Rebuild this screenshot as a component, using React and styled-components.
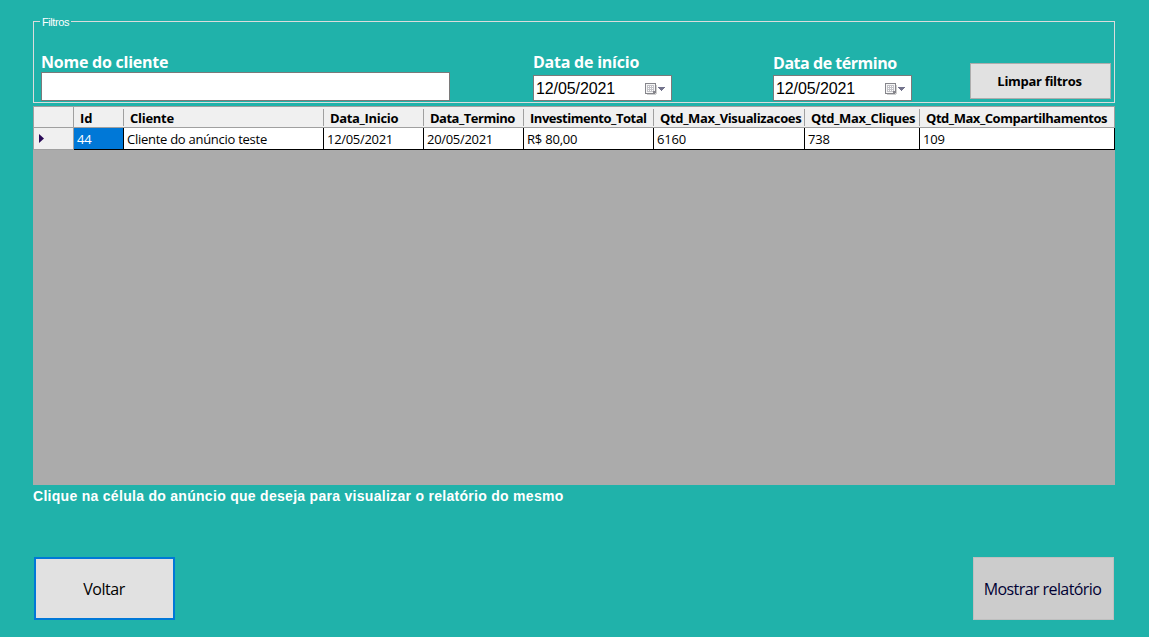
import React from 'react';
import styled, { createGlobalStyle } from 'styled-components';

const Global = createGlobalStyle`
  *, *::before, *::after { box-sizing: border-box; }
  body { margin: 0; background: #20b2aa; }
`;

const ui = '"Open Sans", "Noto Sans", sans-serif';
const system = '"Liberation Sans", Arial, sans-serif';

const Window = styled.main`
  width: 1149px;
  height: 637px;
  padding: 16px 34px 0 33px;
  display: flex;
  flex-direction: column;
  background: #20b2aa;
  overflow: hidden;
`;

const Filters = styled.section`
  height: 87px;
  display: flex;
  flex-direction: column;
  margin-bottom: 3px;
`;

const Legend = styled.div`
  height: 12px;
  width: 1082px;
  display: flex;
  align-items: flex-start;
  color: #fff;
  font: 11px/12px ${system};
  letter-spacing: -0.42px;
  white-space: nowrap;
  &::before, &::after {
    content: '';
    height: 7px;
    margin-top: 5px;
    border-top: 1px solid #dcdcdc;
  }
  &::before { width: 7px; border-left: 1px solid #dcdcdc; }
  &::after { flex: 1; border-right: 1px solid #dcdcdc; }
  span { padding: 0 2px; width: 31px; }
`;

const FilterBody = styled.div`
  flex: 1;
  width: 1082px;
  display: flex;
  align-items: flex-start;
  padding-left: 7px;
  border: 1px solid #dcdcdc;
  border-top: 0;
`;

const Field = styled.label`
  display: flex;
  flex-direction: column;
  width: ${(p) => p.$width}px;
  margin-right: ${(p) => p.$gap}px;
  padding-top: ${(p) => p.$top}px;
`;

const FieldName = styled.span`
  height: ${(p) => p.$height}px;
  color: #fff;
  font: 700 16px/20px ${ui};
  letter-spacing: ${(p) => p.$track}px;
  white-space: nowrap;
`;

const TextInput = styled.input`
  width: 100%;
  height: 29px;
  border: 1px solid #7a7a7a;
  border-radius: 0;
  background: #fff;
  outline: 0;
`;

const DatePicker = styled.div`
  height: 26px;
  display: flex;
  align-items: center;
  justify-content: space-between;
  padding: 1px 5px 0 2px;
  border: 1px solid #7a7a7a;
  background: #fff;
  color: #000;
  font: 16px/24px ${system};
  letter-spacing: -0.1px;
  svg { display: block; }
`;

const Button = styled.button`
  display: block;
  width: ${(p) => p.$width}px;
  height: ${(p) => p.$height}px;
  margin: ${(p) => p.$top || 0}px 0 0;
  padding: ${(p) => p.$pad || '0'};
  border: ${(p) => (p.$focused ? '2px solid #0078d7' : p.disabled ? '1px solid #bfbfbf' : '1px solid #adadad')};
  border-radius: 0;
  background: ${(p) => (p.disabled ? '#cccccc' : '#e1e1e1')};
  color: ${(p) => (p.disabled ? '#000033' : '#000')};
  font: ${(p) => (p.$bold ? '700 13px' : '400 16px')}/20px ${ui};
  letter-spacing: ${(p) => p.$track}px;
  white-space: nowrap;
`;

const Grid = styled.section`
  width: 1082px;
  height: 379px;
  border-top: 1px solid #a0a0a0;
  background: #ababab;
`;

const columns = '50px 200px 100px 100px 130px 151px 115px 195px';

const HeaderRow = styled.div`
  display: grid;
  grid-template-columns: 40px ${columns};
  height: 21px;
  border: solid #a0a0a0;
  border-width: 0 1px 1px;
  background: #f0f0f0;
`;

const Corner = styled.div`
  border-right: 1px solid #a0a0a0;
`;

const HeaderCell = styled.div`
  height: 17px;
  margin-top: 2px;
  padding-left: 6px;
  border-right: ${(p) => (p.$last ? '0' : '1px solid #a0a0a0')};
  color: #000;
  font: 700 13px/18px ${ui};
  letter-spacing: ${(p) => p.$track}px;
  white-space: nowrap;
`;

const DataRow = styled.div`
  display: grid;
  grid-template-columns: 41px ${columns};
  height: 22px;
`;

const RowHeader = styled.div`
  display: flex;
  align-items: center;
  padding-left: 5px;
  border: solid #a0a0a0;
  border-width: 0 1px 1px;
  background: #f0f0f0;
`;

const Cell = styled.div`
  padding: 1px 0 0 3px;
  border-right: 1px solid #000;
  border-bottom: 1px solid #000;
  background: ${(p) => (p.$selected ? '#0078d7' : '#fff')};
  color: ${(p) => (p.$selected ? '#fff' : '#000')};
  font: 400 13px/20px ${ui};
  letter-spacing: ${(p) => p.$track}px;
  white-space: nowrap;
`;

const Hint = styled.p`
  margin: 2px 0 0;
  height: 70px;
  color: #fff;
  font: 700 14px/18px ${system};
  letter-spacing: 0.29px;
  white-space: nowrap;
`;

const Footer = styled.footer`
  display: flex;
  justify-content: space-between;
  padding: 0 1px;
`;

function CalendarIcon() {
  return (
    <svg width="21" height="14" viewBox="0 0 21 14" shapeRendering="crispEdges" aria-hidden="true">
      <path d="M2 3h10v9h-1v1H2z" fill="#d0d0d0" />
      <path d="M0 1h11v10h-1v1H0z" fill="#85858b" />
      <path d="M1 2h9v8H9v1H1z" fill="#f6f6f6" />
      <path d="M2 3h7v7H2z" fill="#c3c3c8" />
      <path d="M3 4h1v1H3zM5 4h1v1H5zM7 4h1v1H7zM3 6h1v1H3zM5 6h1v1H5zM7 6h1v1H7zM3 8h1v1H3zM5 8h1v1H5zM7 8h1v1H7z" fill="#fff" />
      <path d="M8 9h2v1H9v1H8z" fill="#85858b" />
      <path d="M13 5h7v1h-1v1h-1v1h-1v1h-1V8h-1V7h-1V6h-1z" fill="#73738c" />
    </svg>
  );
}

const headers = [
  ['Id', -0.1], ['Cliente', -0.28], ['Data_Inicio', -0.34], ['Data_Termino', -0.5],
  ['Investimento_Total', -0.47], ['Qtd_Max_Visualizacoes', -0.36], ['Qtd_Max_Cliques', -0.37],
  ['Qtd_Max_Compartilhamentos', -0.47],
];

const record = [
  ['44', -0.2], ['Cliente do anúncio teste', -0.27], ['12/05/2021', -0.3], ['20/05/2021', -0.3],
  ['R$ 80,00', -0.2], ['6160', -0.2], ['738', -0.2], ['109', -0.2],
];

export default function App() {
  return (
    <Window>
      <Global />
      <Filters>
        <Legend><span>Filtros</span></Legend>
        <FilterBody>
          <Field $width={409} $gap={83} $top={24}>
            <FieldName $height={20} $track={-0.24}>Nome do cliente</FieldName>
            <TextInput />
          </Field>
          <Field $width={139} $gap={101} $top={24}>
            <FieldName $height={23} $track={-0.23}>Data de início</FieldName>
            <DatePicker><span>12/05/2021</span><CalendarIcon /></DatePicker>
          </Field>
          <Field $width={139} $gap={58} $top={25}>
            <FieldName $height={22} $track={-0.46}>Data de término</FieldName>
            <DatePicker><span>12/05/2021</span><CalendarIcon /></DatePicker>
          </Field>
          <Button $width={141} $height={36} $top={35} $bold $track={-0.3} $pad="0 2px 0 0">Limpar filtros</Button>
        </FilterBody>
      </Filters>
      <Grid>
        <HeaderRow>
          <Corner />
          {headers.map(([name, track], i) => (
            <HeaderCell key={name} $track={track} $last={i === headers.length - 1}>{name}</HeaderCell>
          ))}
        </HeaderRow>
        <DataRow>
          <RowHeader>
            <svg width="5" height="9" viewBox="0 0 5 9" aria-hidden="true"><path d="M0 0l5 4.500-5 4.500z" fill="#2b0a57" /></svg>
          </RowHeader>
          {record.map(([value, track], i) => (
            <Cell key={i} $selected={i === 0} $track={track}>{value}</Cell>
          ))}
        </DataRow>
      </Grid>
      <Hint>Clique na célula do anúncio que deseja para visualizar o relatório do mesmo</Hint>
      <Footer>
        <Button $width={141} $height={63} $focused $track={-0.5} $pad="0 1px 0 0">Voltar</Button>
        <Button $width={141} $height={63} disabled $track={-0.58} $pad="0 2px 0 0">Mostrar relatório</Button>
      </Footer>
    </Window>
  );
}
